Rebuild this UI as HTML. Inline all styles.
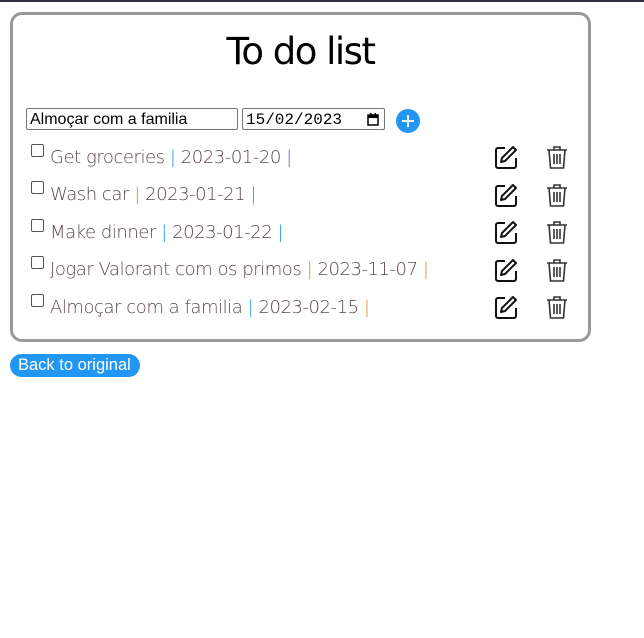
<!DOCTYPE html>
<html><head><style>
body{margin:0;width:644px;height:638px;background:#fff;font-family:"Liberation Sans",sans-serif;position:relative;overflow:hidden}
.top{position:absolute;left:0;top:0;width:644px;height:2px;background:#2b2d42}
.card{position:absolute;left:10px;top:12px;width:575px;height:324px;border:3px solid #999;border-radius:12px}
h1{position:absolute;left:0;width:575px;top:15px;margin:0;text-align:center;font-weight:normal;font-size:37px;font-family:"DejaVu Sans",sans-serif;letter-spacing:-1.5px;color:#000}
.in{position:absolute;top:93px;height:22px;border:1px solid #777;border-radius:2px;font-size:16px;line-height:22px;box-sizing:border-box;padding-left:3px;color:#000}
.plus{position:absolute;left:383px;top:94px;width:24px;height:24px;border-radius:50%;background:#2196f3}
.row{position:absolute;left:16px;font-size:18px;color:#5a4a4a;font-family:"DejaVu Sans",sans-serif;font-weight:200;letter-spacing:-0.45px;white-space:nowrap}
.cb{display:inline-block;width:11px;height:11px;border:1px solid #555;border-radius:2px;vertical-align:6px;margin-right:6px}
.s1{color:#2196f3}.s2{color:#e08a1e}
.btn{position:absolute;left:10px;top:354px;height:23px;padding:0 9px 0 8px;background:#2196f3;color:#fff;border-radius:12px;font-size:16.5px;line-height:23px}
</style></head><body>
<div class="top"></div>
<div class="card">
<h1>To do list</h1>
<div class="in" style="left:13px;width:212px">Almoçar com a familia</div>
<div class="in" style="left:229px;width:143px;font-family:'Liberation Mono',monospace;font-size:16px">15/02/2023
<svg style="position:absolute;right:5px;top:4px" width="12" height="13" viewBox="0 0 12 13"><rect x="1" y="2" width="10" height="10" fill="none" stroke="#000" stroke-width="1.5"/><rect x="1" y="2" width="10" height="3" fill="#000"/><rect x="3" y="0" width="1.5" height="3"/><rect x="7.5" y="0" width="1.5" height="3"/></svg></div>
<div class="plus"><svg width="24" height="24"><path d="M12 6v12M6 12h12" stroke="#fff" stroke-width="2"/></svg></div>
</div>
<div class="row" style="top:144px;left:31px"><span class="cb"></span>Get groceries <span class="s1">|</span> 2023-01-20 <span style="color:#8a5aa0">|</span></div>
<div class="row" style="top:181px;left:31px"><span class="cb"></span>Wash car <span class="s2">|</span> 2023-01-21 <span class="s1">|</span></div>
<div class="row" style="top:219px;left:31px"><span class="cb"></span>Make dinner <span class="s1">|</span> 2023-01-22 <span class="s1">|</span></div>
<div class="row" style="top:256px;left:31px"><span class="cb"></span>Jogar Valorant com os primos <span class="s2">|</span> 2023-11-07 <span class="s2">|</span></div>
<div class="row" style="top:294px;left:31px"><span class="cb"></span>Almoçar com a familia <span class="s1">|</span> 2023-02-15 <span class="s2">|</span></div>
<svg width="644" height="638" style="position:absolute;left:0;top:0">
<defs>
<g id="ed"><path d="M11 3H4a2 2 0 0 0-2 2v16a2 2 0 0 0 2 2h16a2 2 0 0 0 2-2v-8" fill="none" stroke="#111" stroke-width="2"/><path d="M19 2l3 3-11 11-4 1 1-4z" fill="none" stroke="#111" stroke-width="2" stroke-linejoin="round"/></g>
<g id="tr" fill="none" stroke="#333" stroke-width="1.6"><path d="M2 5h20M9 5V2h6v3"/><path d="M4 5l1.5 18h13L20 5"/><path d="M9 9v10M12 9v10M15 9v10"/></g>
</defs>
<use href="#ed" x="494" y="145"/><use href="#tr" x="545" y="145"/>
<use href="#ed" x="494" y="183"/><use href="#tr" x="545" y="183"/>
<use href="#ed" x="494" y="220"/><use href="#tr" x="545" y="220"/>
<use href="#ed" x="494" y="258"/><use href="#tr" x="545" y="258"/>
<use href="#ed" x="494" y="295"/><use href="#tr" x="545" y="295"/>
</svg>
<div class="btn">Back to original</div>
</body></html>
